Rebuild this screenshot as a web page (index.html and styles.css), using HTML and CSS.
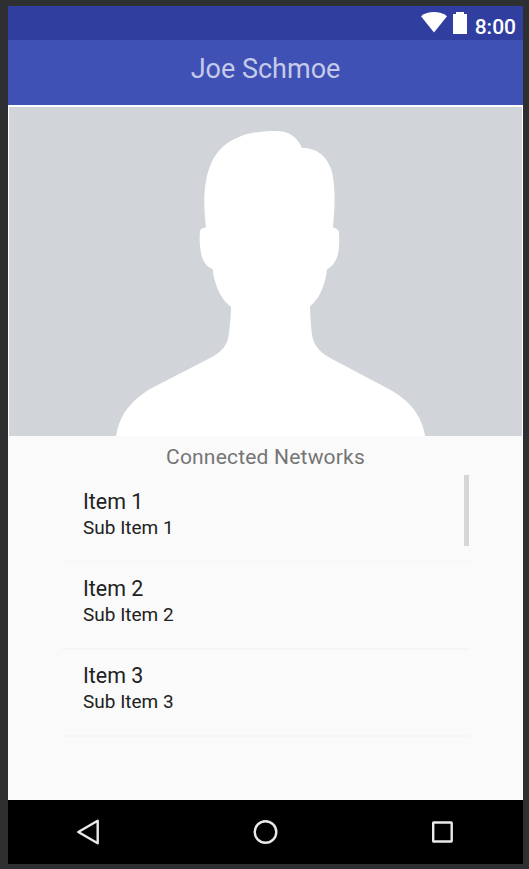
FILE: index.html
```html
<!DOCTYPE html>
<html lang="en">
<head>
<meta charset="utf-8">
<title>Joe Schmoe</title>
<link rel="stylesheet" href="styles.css">
</head>
<body>
<div class="screen">
  <div class="status-bar">
    <svg class="wifi" width="28" height="22" viewBox="0 0 28 22"><path d="M1 5.200C4.500 2 9 .9 14 .9S23.500 2 27 5.200L14 21.500Z"/></svg>
    <svg class="battery" width="14" height="22" viewBox="0 0 14 22"><path d="M0 2H3V0H11V2H14V22H0Z"/></svg>
    <span class="clock">8:00</span>
  </div>
  <header class="app-bar"><h1>Joe Schmoe</h1></header>
  <div class="photo">
    <svg width="513" height="329" viewBox="9 107 513 329">
      <path d="M116 436C119 418 127 405 144 393Q147 390.800 151 388.500L211 357.500C221 352 228 346 229 333C230 323 231 315 231 307C220 298 215 286 212.500 269C204 266 201 257 200 246C199.500 240 199.500 236 200 231Q201 227.500 206 227.500C204 212 203.500 193 206 181C211 154 224 143 239 137C250 132.500 262 131 275 131C290 131 297 137 302 148C315 147 328 156 332 172C336 191 334.500 209 333 227.500Q338 228.500 339 232C339.500 242 339.500 249 337.500 256Q334.500 265 327 269.500C325 285 320 298 310 306.500C310 315 311 326 312 335C314 347 321 353 332 359L384 386.500C409 399 422 415 425 436Z"/>
    </svg>
  </div>
  <main class="content">
    <h2>Connected Networks</h2>
    <ul class="list">
      <li><span class="title">Item 1</span><span class="sub">Sub Item 1</span></li>
      <li><span class="title">Item 2</span><span class="sub">Sub Item 2</span></li>
      <li><span class="title">Item 3</span><span class="sub">Sub Item 3</span></li>
    </ul>
  </main>
  <nav class="nav-bar">
    <svg width="28" height="28" viewBox="0 0 28 28"><path d="M3.300 14 22.700 2.800V25.200Z"/></svg>
    <svg width="28" height="28" viewBox="0 0 28 28"><circle cx="13.500" cy="14" r="10.800"/></svg>
    <svg width="28" height="28" viewBox="0 0 28 28"><rect x="4.200" y="4.500" width="18.500" height="19" rx=".5"/></svg>
  </nav>
</div>
</body>
</html>
```

FILE: styles.css
```css
* { box-sizing: border-box; margin: 0; padding: 0; }
body {
  height: 869px;
  padding: 6px 6px 5px 8px;
  background: #2d2f31;
  font-family: Roboto, sans-serif;
  overflow: hidden;
}
.screen {
  display: flex;
  flex-direction: column;
  width: 515px;
  height: 858px;
  background: #fafafa;
}
svg { display: block; flex: none; }
.status-bar {
  display: flex;
  justify-content: flex-end;
  height: 34px;
  padding: 6px 7px 0 0;
  background: #303f9f;
  color: #fff;
}
.status-bar svg { fill: #fff; }
.wifi { margin: -1px 5px 0 0; }
.battery { margin-right: 8px; }
.clock { font-size: 21px; line-height: 30px; font-weight: 500; }
.app-bar { height: 65px; background: #3f51b5; text-align: center; }
.app-bar h1 {
  padding-top: 13px;
  color: #c5cae9;
  font-size: 27px;
  line-height: 32px;
  font-weight: 400;
}
.photo { height: 331px; padding: 2px 1px 0; background: #fff; }
.photo svg { background: #d1d4d9; fill: #fff; }
.content { flex: 1; }
.content h2 {
  height: 39px;
  padding-top: 9px;
  color: #757575;
  font-size: 21px;
  letter-spacing: .2px;
  line-height: 25px;
  font-weight: 400;
  text-align: center;
}
.list {
  position: relative;
  width: 407px;
  margin-left: 54px;
  list-style: none;
}
.list::after {
  content: "";
  position: absolute;
  top: 0;
  right: 0;
  width: 5px;
  height: 71px;
  background: #d6d6d6;
}
.list li {
  display: flex;
  flex-direction: column;
  height: 87px;
  padding: 14px 0 0 21px;
  color: #212121;
  box-shadow: 0 1px #f5f5f5, inset 0 -1px #f5f5f5;
}
.list li:first-child { box-shadow: inset 0 -1px #f5f5f5; }
.title { font-size: 21.4px; line-height: 26px; }
.sub { font-size: 19px; line-height: 26px; }
.nav-bar {
  display: flex;
  justify-content: space-between;
  align-items: center;
  height: 64px;
  padding: 0 66px 0 67px;
  background: #000;
}
.nav-bar svg { fill: none; stroke: #eaeaea; stroke-width: 2.4; stroke-linejoin: round; }
```
